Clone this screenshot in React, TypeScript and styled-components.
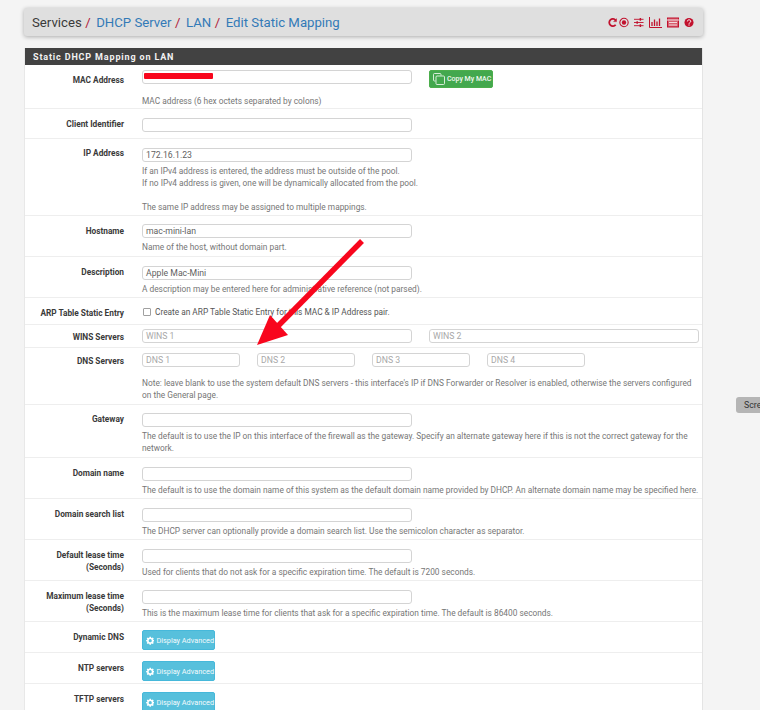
import React from "react";
import styled, { createGlobalStyle } from "styled-components";

const GlobalStyle = createGlobalStyle`
  html, body {
    margin: 0;
    padding: 0;
    background: #f4f4f4;
    overflow: hidden;
  }
  body {
    font-family: Roboto, "Liberation Sans", sans-serif;
    color: #333;
  }
`;

const Page = styled.div`
  position: relative;
  width: 760px;
  height: 710px;
  overflow: hidden;
  padding: 8px 57px 0 24px;
  box-sizing: border-box;
`;

const Breadcrumb = styled.div`
  display: flex;
  align-items: center;
  justify-content: space-between;
  height: 28px;
  background: #dfdfdf;
  border-radius: 3px;
  box-shadow: 0 1px 4px rgba(0, 0, 0, 0.3);
  padding: 0 9px 0 8px;
  margin-bottom: 12px;
`;

const Crumbs = styled.div`
  display: flex;
  font-size: 13.2px;
  white-space: nowrap;
`;

const Crumb = styled.span<{ $link?: boolean }>`
  color: ${(p) => (p.$link ? "#337ab7" : "#3a3a3a")};
`;

const Slash = styled.span`
  color: #b0213a;
  margin: 0 5.5px 0 3.5px;
`;

const Shortcuts = styled.div`
  display: flex;
  align-items: center;
  gap: 5px;
`;

const ShortcutIcon = styled.svg<{ $tight?: boolean }>`
  height: 11px;
  display: block;
  fill: none;
  stroke: #c1112d;
  margin-right: ${(p) => (p.$tight ? -3 : 0)}px;
`;

const Panel = styled.section`
  background: #fff;
  border-right: 1px solid #e4e4e4;
  border-left: 1px solid #e8e8e8;
`;

const PanelHeading = styled.h2`
  margin: 0;
  height: 17px;
  line-height: 18px;
  background: #424242;
  color: #f2f2f2;
  font-size: 9px;
  font-weight: 700;
  letter-spacing: 0.85px;
  padding-left: 8px;
`;

const Row = styled.div<{ $h: number }>`
  display: grid;
  grid-template-columns: 99px 1fr;
  column-gap: 18px;
  height: ${(p) => p.$h}px;
  box-sizing: border-box;
  border-bottom: 1px solid #eeeeee;
`;

const Label = styled.div<{ $top?: number }>`
  text-align: right;
  font-size: 8.3px;
  font-weight: 700;
  line-height: 12px;
  color: #3a3a3a;
  padding-top: ${(p) => p.$top ?? 9}px;
`;

const Content = styled.div<{ $pad?: number }>`
  min-width: 0;
  padding-top: ${(p) => p.$pad ?? 9}px;
`;

const Inline = styled.div`
  display: flex;
  align-items: flex-start;
`;

const Field = styled.div<{ $w?: number; $gap?: number }>`
  width: ${(p) => p.$w ?? 270}px;
  height: 14px;
  box-sizing: border-box;
  flex: none;
  border: 1px solid #d4d4d4;
  border-radius: 3px;
  background: #fff;
  margin-right: ${(p) => p.$gap ?? 0}px;
  font-size: 8.7px;
  line-height: 12px;
  padding-left: 3px;
  color: #5f5f5f;
  position: relative;
`;

const Placeholder = styled.span`
  color: #a8a8a8;
`;

const Redaction = styled.span`
  position: absolute;
  left: 1px;
  top: 2px;
  width: 69px;
  height: 6px;
  background: #f8061d;
  border-radius: 1px;
`;

const Help = styled.div<{ $top?: number }>`
  font-size: 8.34px;
  line-height: 12px;
  color: #767676;
  margin-top: ${(p) => p.$top ?? 3}px;
  white-space: nowrap;
`;

const Gap = styled.div`
  height: 12px;
`;

const CheckLine = styled.label`
  display: flex;
  align-items: center;
  font-size: 8.3px;
  line-height: 12px;
  color: #555;
`;

const CheckBox = styled.span`
  width: 6px;
  height: 6px;
  border: 1px solid #a0a0a0;
  border-radius: 1px;
  margin: 0 4px 0 1px;
`;

const CopyButton = styled.button`
  display: flex;
  align-items: center;
  gap: 2px;
  height: 18px;
  width: 64px;
  margin: 0 0 0 17px;
  padding: 0 0 0 3px;
  border: 1px solid #4cae4c;
  border-radius: 2px;
  background: #43a84e;
  color: #f1f8f1;
  font: 500 7px Roboto, sans-serif;
  white-space: nowrap;
`;

const AdvancedButton = styled.button`
  display: flex;
  align-items: center;
  gap: 2px;
  width: 73px;
  height: 20px;
  margin: 0;
  padding: 0 0 0 3px;
  border: 1px solid #46b8da;
  border-radius: 2px;
  background: #57c0dc;
  color: #f4fbfd;
  font: 400 7.3px Roboto, sans-serif;
  white-space: nowrap;
`;

const Arrow = styled.svg`
  position: absolute;
  left: 240px;
  top: 230px;
  width: 135px;
  height: 120px;
`;

const SideTab = styled.div`
  position: absolute;
  left: 736px;
  top: 397px;
  width: 40px;
  height: 16px;
  background: #b5b5b5;
  border-radius: 3px;
  font-size: 8.8px;
  line-height: 16px;
  padding-left: 8px;
  color: #333;
`;

const Gear = () => (
  <svg width="11" height="11" viewBox="0 0 24 24" fill="#fff">
    <path d="M10 1h4l.6 3.2 1.9.8L19.200 3.200 22 6l-1.800 2.700.8 1.900L24 11v3l-3 .6-.8 1.900 1.800 2.700-2.800 2.800-2.700-1.800-1.900.8L14 24h-4l-.6-3-1.900-.8L4.800 22 2 19.200l1.800-2.700-.8-1.900L0 14v-3l3-.4.8-1.900L2 6l2.800-2.800L7.500 5l1.900-.8zM12 8a4.500 4.500 0 1 0 0 9 4.500 4.500 0 0 0 0-9z" />
  </svg>
);

const Copy = () => (
  <svg width="12" height="12" viewBox="0 0 12 12" fill="none" stroke="#e8f5e8" strokeWidth="0.9">
    <path d="M8 2.500V1.500a1 1 0 0 0-1-1H1.500a1 1 0 0 0-1 1V7a1 1 0 0 0 1 1h1" />
    <rect x="3" y="3" width="8.500" height="8.500" rx="1" />
  </svg>
);

const DisplayAdvanced = () => (
  <AdvancedButton>
    <Gear />
    Display Advanced
  </AdvancedButton>
);

const App: React.FC = () => (
  <>
    <GlobalStyle />
    <Page>
      <Breadcrumb>
        <Crumbs>
          <Crumb>Services</Crumb>
          <Slash>/</Slash>
          <Crumb $link>DHCP Server</Crumb>
          <Slash>/</Slash>
          <Crumb $link>LAN</Crumb>
          <Slash>/</Slash>
          <Crumb $link>Edit Static Mapping</Crumb>
        </Crumbs>
        <Shortcuts>
          <ShortcutIcon $tight viewBox="0 0 10 11" width="9" strokeWidth="2">
            <path d="M8.500 8a4 4 0 1 1 0-5" />
            <path d="M9.500 1v3.500H6" fill="#c1112d" strokeWidth="0.5" />
          </ShortcutIcon>
          <ShortcutIcon viewBox="0 0 11 11" width="10" strokeWidth="1.200">
            <circle cx="5.500" cy="5.500" r="4.600" />
            <circle cx="5.500" cy="5.500" r="2.400" fill="#c1112d" stroke="none" />
          </ShortcutIcon>
          <ShortcutIcon viewBox="0 0 11 11" width="10" strokeWidth="1">
            <path d="M0 2h10.500M0 5.500h10.500M0 9h10.500" />
            <path d="M7 .5v3M3.500 4v3M7 7.500v3" strokeWidth="1.600" />
          </ShortcutIcon>
          <ShortcutIcon viewBox="0 0 13 11" width="13" strokeWidth="1">
            <path d="M.5 0v10.500H13" />
            <path d="M3 9V5M5.500 9V2.500M8 9V4.500M10.500 9V1.500" strokeWidth="1.300" />
          </ShortcutIcon>
          <ShortcutIcon viewBox="0 0 12 11" width="12" strokeWidth="1">
            <rect x="0.500" y="1" width="11" height="9" fill="#d75f6f" />
            <path d="M0 3h12M2 5.500h8M2 8h8" stroke="#f2dadd" />
          </ShortcutIcon>
          <ShortcutIcon viewBox="0 0 11 11" width="10" strokeWidth="0">
            <circle cx="5.500" cy="5.500" r="5" fill="#c1112d" />
            <path d="M3.700 4.300c0-2.300 3.700-2.300 3.700 0 0 1.300-1.900 1.300-1.900 2.500M5.500 7.600v1.300" fill="none" stroke="#fff" strokeWidth="1.100" />
          </ShortcutIcon>
        </Shortcuts>
      </Breadcrumb>

      <Panel>
        <PanelHeading>Static DHCP Mapping on LAN</PanelHeading>

        <Row $h={44}>
          <Label>MAC Address</Label>
          <Content $pad={5}>
            <Inline>
              <Field>
                <Redaction />
              </Field>
              <CopyButton>
                <Copy />
                Copy My MAC
              </CopyButton>
            </Inline>
            <Help $top={7}>MAC address (6 hex octets separated by colons)</Help>
          </Content>
        </Row>

        <Row $h={30}>
          <Label>Client Identifier</Label>
          <Content>
            <Field />
          </Content>
        </Row>

        <Row $h={77}>
          <Label $top={8}>IP Address</Label>
          <Content>
            <Field>172.16.1.23</Field>
            <Help>
              If an IPv4 address is entered, the address must be outside of the pool.
              <br />
              If no IPv4 address is given, one will be dynamically allocated from the pool.
            </Help>
            <Gap />
            <Help $top={0}>The same IP address may be assigned to multiple mappings.</Help>
          </Content>
        </Row>

        <Row $h={41}>
          <Label>Hostname</Label>
          <Content $pad={8}>
            <Field>mac-mini-lan</Field>
            <Help>Name of the host, without domain part.</Help>
          </Content>
        </Row>

        <Row $h={41}>
          <Label>Description</Label>
          <Content>
            <Field>Apple Mac-Mini</Field>
            <Help>A description may be entered here for administrative reference (not parsed).</Help>
          </Content>
        </Row>

        <Row $h={27}>
          <Label>ARP Table Static Entry</Label>
          <Content $pad={8}>
            <CheckLine>
              <CheckBox />
              Create an ARP Table Static Entry for this MAC &amp; IP Address pair.
            </CheckLine>
          </Content>
        </Row>

        <Row $h={23}>
          <Label $top={6}>WINS Servers</Label>
          <Content $pad={4}>
            <Inline>
              <Field $gap={17}>
                <Placeholder>WINS 1</Placeholder>
              </Field>
              <Field>
                <Placeholder>WINS 2</Placeholder>
              </Field>
            </Inline>
          </Content>
        </Row>

        <Row $h={57}>
          <Label $top={7}>DNS Servers</Label>
          <Content $pad={5}>
            <Inline>
              <Field $w={98} $gap={17}>
                <Placeholder>DNS 1</Placeholder>
              </Field>
              <Field $w={98} $gap={17}>
                <Placeholder>DNS 2</Placeholder>
              </Field>
              <Field $w={98} $gap={17}>
                <Placeholder>DNS 3</Placeholder>
              </Field>
              <Field $w={98}>
                <Placeholder>DNS 4</Placeholder>
              </Field>
            </Inline>
            <Help $top={10}>
              Note: leave blank to use the system default DNS servers - this interface's IP if DNS Forwarder or Resolver is enabled, otherwise the servers configured
              <br />
              on the General page.
            </Help>
          </Content>
        </Row>

        <Row $h={53}>
          <Label $top={8}>Gateway</Label>
          <Content $pad={8}>
            <Field />
            <Help>
              The default is to use the IP on this interface of the firewall as the gateway. Specify an alternate gateway here if this is not the correct gateway for the
              <br />
              network.
            </Help>
          </Content>
        </Row>

        <Row $h={41}>
          <Label>Domain name</Label>
          <Content>
            <Field />
            <Help>The default is to use the domain name of this system as the default domain name provided by DHCP. An alternate domain name may be specified here.</Help>
          </Content>
        </Row>

        <Row $h={41}>
          <Label>Domain search list</Label>
          <Content>
            <Field />
            <Help>The DHCP server can optionally provide a domain search list. Use the semicolon character as separator.</Help>
          </Content>
        </Row>

        <Row $h={41}>
          <Label>
            Default lease time
            <br />
            (Seconds)
          </Label>
          <Content>
            <Field />
            <Help>Used for clients that do not ask for a specific expiration time. The default is 7200 seconds.</Help>
          </Content>
        </Row>

        <Row $h={41}>
          <Label>
            Maximum lease time
            <br />
            (Seconds)
          </Label>
          <Content>
            <Field />
            <Help>This is the maximum lease time for clients that ask for a specific expiration time. The default is 86400 seconds.</Help>
          </Content>
        </Row>

        <Row $h={31}>
          <Label>Dynamic DNS</Label>
          <Content $pad={8}>
            <DisplayAdvanced />
          </Content>
        </Row>

        <Row $h={31}>
          <Label>NTP servers</Label>
          <Content $pad={8}>
            <DisplayAdvanced />
          </Content>
        </Row>

        <Row $h={31}>
          <Label>TFTP servers</Label>
          <Content $pad={8}>
            <DisplayAdvanced />
          </Content>
        </Row>
      </Panel>

      <Arrow viewBox="0 0 135 120">
        <path d="M122 11 L38 96" stroke="#f8061d" strokeWidth="5.500" />
        <path d="M17 115 L30 85 L48 105 Z" fill="#f8061d" />
      </Arrow>
      <SideTab>Scre</SideTab>
    </Page>
  </>
);

export default App;
